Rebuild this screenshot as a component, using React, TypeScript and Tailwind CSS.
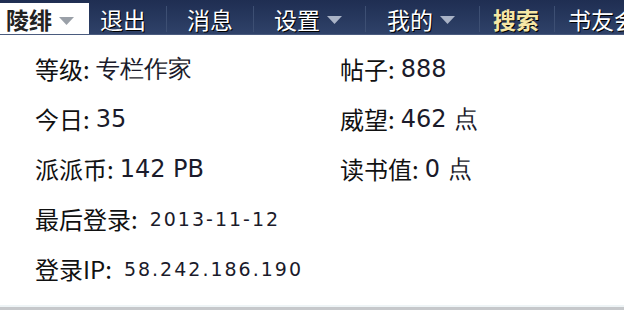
import React from "react";

const cjk = { fontFamily: '"Noto Sans CJK SC", "Noto Sans", sans-serif' };

function Arrow({ color }: { color: string }) {
  return (
    <svg width="15" height="8" viewBox="0 0 15 8" className="ml-[7px] mt-[2px] shrink-0">
      <polygon points="0,0 15,0 7.5,8" fill={color} />
    </svg>
  );
}

function Sep() {
  return <div className="w-[1px] h-[26px] self-end mb-[2px] bg-[#3d4f73] shrink-0" />;
}

function Row({ label, value, small }: { label: string; value: string; small?: boolean }) {
  return (
    <div className="h-[50px] flex items-center text-[#111] whitespace-nowrap">
      <span className="text-[24px] leading-none" style={cjk}>{label}</span>
      <span
        className={
          small
            ? "text-[19px] tracking-[2px] leading-none ml-[12px] text-[#1b1b2b] font-['DejaVu_Sans',sans-serif]"
            : "text-[24px] leading-none ml-[6px] text-[#1b1b2b] font-['DejaVu_Sans',sans-serif]"
        }
      >
        {value}
      </span>
    </div>
  );
}

export default function App() {
  return (
    <div className="w-[624px] h-[310px] bg-white flex flex-col overflow-hidden">
      <div
        className="h-[35px] flex items-stretch bg-gradient-to-b from-[#1f2e52] to-[#2f4269] border-b border-[#4a5b7e] text-[23px] leading-none text-white whitespace-nowrap overflow-hidden"
        style={cjk}
      >
        <div className="mt-[3px] w-[89px] shrink-0 bg-white flex items-center pl-[6px] pt-[2px] text-[#222] font-bold">
          陵绯
          <Arrow color="#9aa0a8" />
        </div>
        <div className="shrink-0 flex items-center pt-[4px] pl-[11px] pr-[20px] [text-shadow:1px_1px_0_#000]">退出</div>
        <Sep />
        <div className="shrink-0 flex items-center pt-[4px] pl-[20px] pr-[20px] [text-shadow:1px_1px_0_#000]">消息</div>
        <Sep />
        <div className="shrink-0 flex items-center pt-[4px] pl-[20px] pr-[23px] [text-shadow:1px_1px_0_#000]">
          设置
          <Arrow color="#a9b3c6" />
        </div>
        <Sep />
        <div className="shrink-0 flex items-center pt-[4px] pl-[21px] pr-[24px] [text-shadow:1px_1px_0_#000]">
          我的
          <Arrow color="#a9b3c6" />
        </div>
        <Sep />
        <div className="shrink-0 flex items-center pt-[4px] pl-[13px] pr-[15px] text-[#f6e7a6] font-bold [text-shadow:1px_1px_0_#000]">搜索</div>
        <Sep />
        <div className="shrink-0 flex items-center pt-[4px] pl-[13px] [text-shadow:1px_1px_0_#000]">书友会</div>
      </div>
      <div className="pt-[9px] pl-[35px] grid grid-cols-[305px_1fr]">
        <Row label="等级:" value="专栏作家" />
        <Row label="帖子:" value="888" />
        <Row label="今日:" value="35" />
        <Row label="威望:" value="462 点" />
        <Row label="派派币:" value="142 PB" />
        <Row label="读书值:" value="0 点" />
        <Row label="最后登录:" value="2013-11-12" small />
        <div />
        <Row label="登录IP:" value="58.242.186.190" small />
        <div />
      </div>
      <div className="flex-1" />
      <div className="h-[2px] bg-[#eef4f6]" />
      <div className="h-[3px] bg-[#c6c8cb]" />
    </div>
  );
}
